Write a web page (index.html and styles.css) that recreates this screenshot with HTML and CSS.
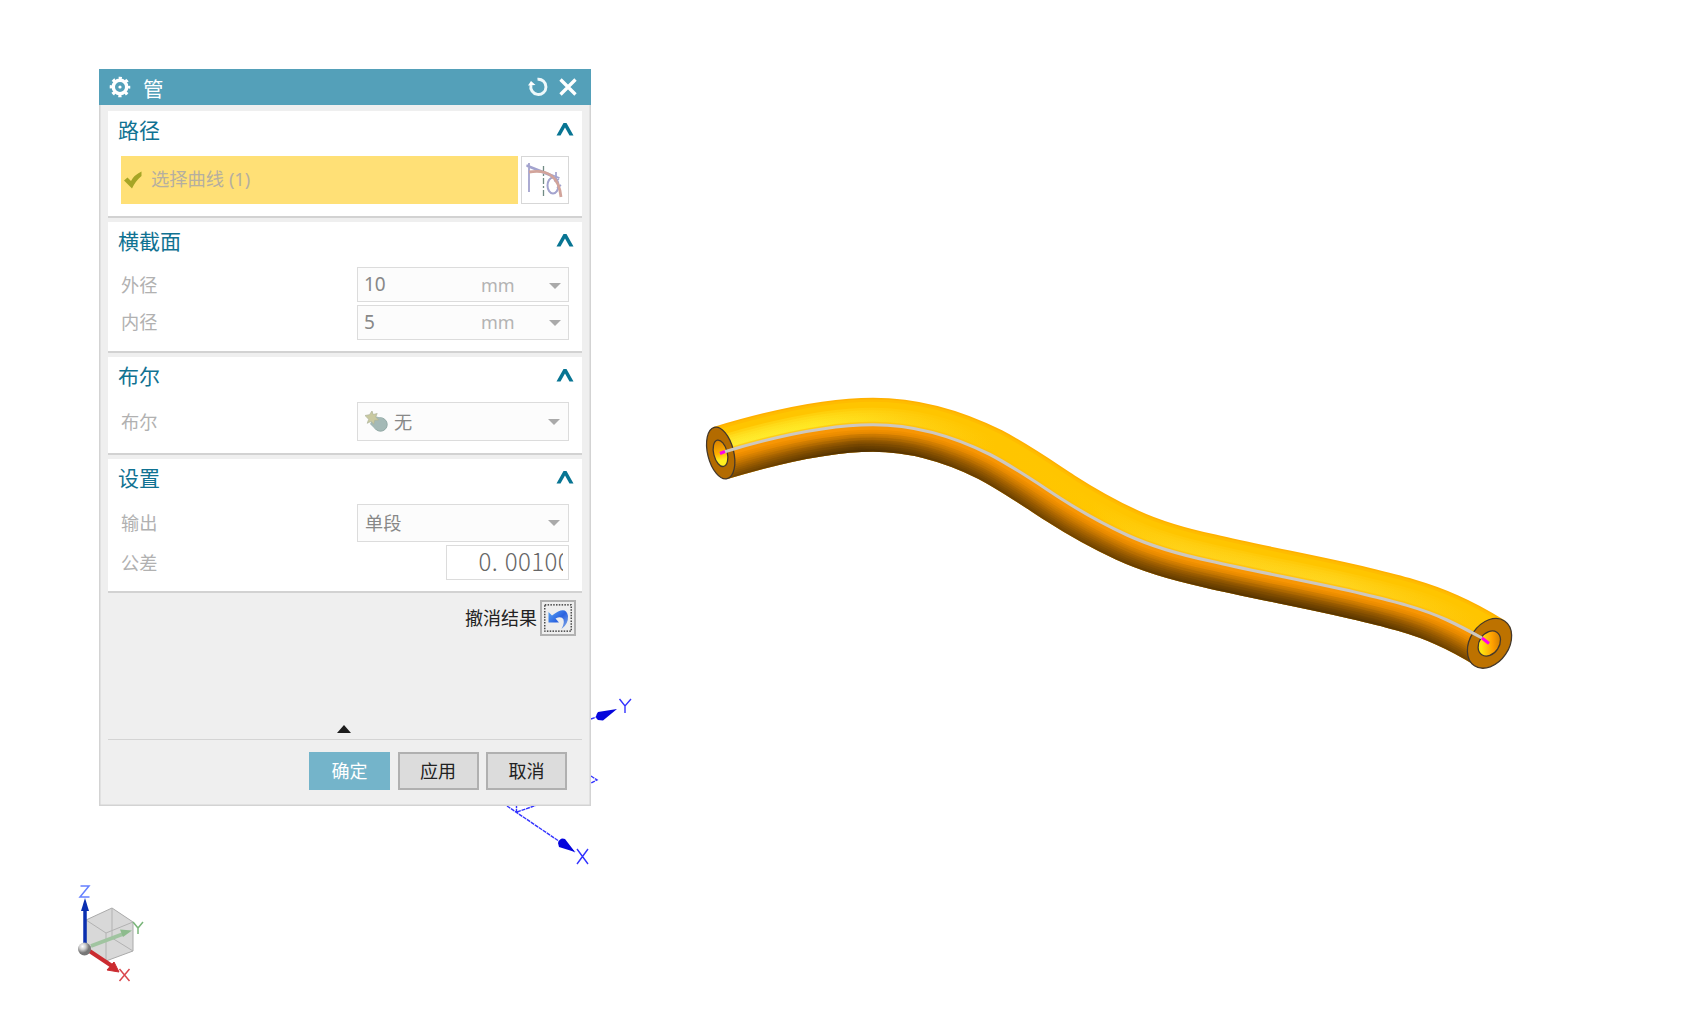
FILE: index.html
```html
<!DOCTYPE html>
<html lang="zh-CN">
<head>
<meta charset="utf-8">
<title>管</title>
<link rel="stylesheet" href="styles.css">
</head>
<body>
<main class="workspace">
<svg class="viewport" viewBox="0 0 1699 1024">
  <defs>
    <path id="centre" d="M720.5 453C770 438 825 424.700 873 424.700C915 424.700 955 437 990 454.500C1014 467 1037 483 1060 498C1081 511.500 1103 524 1127 535C1153 547 1182 555 1210 561C1261 573 1313 582 1363 594C1392 601 1421 608 1447 620C1463 627 1477 635 1490 643"/>
    <clipPath id="lower"><path d="M720.5 453C770 438 825 424.700 873 424.700C915 424.700 955 437 990 454.500C1014 467 1037 483 1060 498C1081 511.500 1103 524 1127 535C1153 547 1182 555 1210 561C1261 573 1313 582 1363 594C1392 601 1421 608 1447 620C1463 627 1477 635 1490 643L1470 720H700Z"/></clipPath>
    <linearGradient id="glow" gradientUnits="userSpaceOnUse" x1="720" y1="0" x2="1490" y2="0">
      <stop offset="0" stop-color="#fff238"/><stop offset=".12" stop-color="#ffec28"/><stop offset=".24" stop-color="#ffd416"/><stop offset=".36" stop-color="#ffc500"/><stop offset=".48" stop-color="#ffc800"/><stop offset=".6" stop-color="#ffd41c"/><stop offset=".8" stop-color="#ffd722"/><stop offset="1" stop-color="#ffc400"/>
    </linearGradient>
    <linearGradient id="shade" gradientUnits="userSpaceOnUse" x1="720" y1="0" x2="1490" y2="0">
      <stop offset="0" stop-color="#3c2400" stop-opacity="0"/><stop offset=".18" stop-color="#3c2400" stop-opacity=".65"/><stop offset=".3" stop-color="#3c2400" stop-opacity=".3"/><stop offset=".45" stop-color="#3c2400" stop-opacity=".1"/><stop offset=".65" stop-color="#3c2400" stop-opacity=".5"/><stop offset=".85" stop-color="#3c2400" stop-opacity=".5"/><stop offset="1" stop-color="#3c2400" stop-opacity="0"/>
    </linearGradient>
    <linearGradient id="boreL" x1="0" y1="0" x2="0" y2="1"><stop offset="0" stop-color="#d98200"/><stop offset=".5" stop-color="#ffb000"/><stop offset=".75" stop-color="#fff020"/></linearGradient>
    <linearGradient id="boreR" x1="1" y1="0" x2="0" y2="1"><stop offset=".1" stop-color="#c97800"/><stop offset=".4" stop-color="#ff9f00"/><stop offset=".75" stop-color="#ffe310"/></linearGradient>
    <radialGradient id="ball" cx=".35" cy=".3"><stop offset="0" stop-color="#fff"/><stop offset=".5" stop-color="#ccc"/><stop offset="1" stop-color="#777"/></radialGradient>
  </defs>
  <g class="tube">
    <g>
      <use href="#centre" stroke="#ffb000" stroke-width="54"/>
      <use href="#centre" stroke="#ffbc00" stroke-width="51"/>
      <use href="#centre" stroke="#ffc500" stroke-width="46"/>
      <g stroke="url(#glow)" stroke-opacity=".3">
        <use href="#centre" stroke-width="34"/><use href="#centre" stroke-width="29"/><use href="#centre" stroke-width="24"/><use href="#centre" stroke-width="19"/><use href="#centre" stroke-width="15"/><use href="#centre" stroke-width="11"/>
      </g>
      <use href="#centre" stroke="#ffba08" stroke-opacity=".6" stroke-width="6"/>
    </g>
    <g clip-path="url(#lower)">
      <use href="#centre" stroke="#7b4a00" stroke-width="54"/>
      <use href="#centre" stroke="#865100" stroke-width="50"/>
      <use href="#centre" stroke="#925800" stroke-width="46"/>
      <use href="#centre" stroke="#9e5f00" stroke-width="42"/>
      <use href="#centre" stroke="#ab6600" stroke-width="38"/>
      <use href="#centre" stroke="#b86e00" stroke-width="34"/>
      <use href="#centre" stroke="#c57600" stroke-width="30"/>
      <use href="#centre" stroke="#d07d00" stroke-width="26"/>
      <use href="#centre" stroke="#dc8400" stroke-width="22"/>
      <use href="#centre" stroke="#e78a00" stroke-width="18"/>
      <use href="#centre" stroke="#ef8f00" stroke-width="14"/>
      <use href="#centre" stroke="#f89604" stroke-width="10"/>
      <mask id="rim" maskUnits="userSpaceOnUse" x="690" y="380" width="840" height="320">
        <use href="#centre" stroke="#fff" stroke-width="56"/>
        <use href="#centre" stroke="#ccc" stroke-width="49"/>
        <use href="#centre" stroke="#aaa" stroke-width="43"/>
        <use href="#centre" stroke="#888" stroke-width="37"/>
        <use href="#centre" stroke="#555" stroke-width="31"/>
        <use href="#centre" stroke="#2a2a2a" stroke-width="25"/>
        <use href="#centre" stroke="#000" stroke-width="18"/>
      </mask>
      <g mask="url(#rim)"><use href="#centre" stroke="url(#shade)" stroke-width="54"/></g>
    </g>
  </g>
  <g class="tube-end">
    <ellipse cx="720.7" cy="453" rx="13" ry="26.500" transform="rotate(-14 720.7 453)" fill="#b36b00"/>
    <ellipse cx="720.5" cy="453.300" rx="6.800" ry="13.500" transform="rotate(-14 720.5 453.3)" fill="url(#boreL)"/>
    <ellipse cx="1489.500" cy="643.300" rx="19.500" ry="27" transform="rotate(34 1489.5 643.3)" fill="#bd7200"/>
    <ellipse cx="1489.300" cy="643.500" rx="10" ry="13.500" transform="rotate(34 1489.3 643.5)" fill="url(#boreR)"/>
  </g>
  <path class="path-line" d="M724 451.900C770 438 825 424.700 873 424.700C915 424.700 955 437 990 454.500C1014 467 1037 483 1060 498C1081 511.500 1103 524 1127 535C1153 547 1182 555 1210 561C1261 573 1313 582 1363 594C1392 601 1421 608 1447 620C1460 626 1471 632 1482 638"/>
  <path class="path-tip" d="M720 453.500l5-2M1482 638l7 5.500"/>

  <g class="datum">
    <path stroke-dasharray="4 .8" d="M507 806L575 852M517 812l20-7M516.500 804v8M591 719l8-3M591 776l6 4-6 3"/>
    <path class="datum-head" d="M617 709L598 712q-4 5 0 8l5 .5ZM575 852L565 839q-5-2-7 4l1 4Z"/>
    <path d="M619.500 699l5.500 7 6-7M625 706v7M577 849l11 15M588 849l-11 15"/>
  </g>

  <g class="triad">
    <path d="M86 920l26-12 21 14v29l-27 10-20-13Z" fill="#d8d8d8" stroke="#aaa"/>
    <path d="M86 920l20 13 27-11M106 933v28M112 908v30l21 13M112 938l-26 10" fill="none" stroke="#b2b2b2"/>
    <path d="M91 946l32-12" stroke="#a0c4a0" stroke-width="4"/>
    <path d="M120 929.500l12 1-9 6.500Z" fill="#8dbb8d"/>
    <path d="M85 947v-39" stroke="#0a2fb0" stroke-width="3.500"/>
    <path d="M85 898l4 13h-8Z" fill="#0a2fb0"/>
    <path d="M88 950l24 16" stroke="#cb2b30" stroke-width="4"/>
    <path d="M114 962l5 10-12-2Z" fill="#cb2b30" stroke="#cb2b30"/>
    <circle cx="84.500" cy="949" r="6.500" fill="url(#ball)"/>
    <path d="M80.500 886h8.500l-9 11h9.500" fill="none" stroke="#6580ff" stroke-width="1.500"/>
    <path d="M133 922l5 6 5-6M138 928v6" fill="none" stroke="#79b579" stroke-width="1.500"/>
    <path d="M119.500 969l10 12M129.500 969l-10 12" fill="none" stroke="#d9474d" stroke-width="1.500"/>
  </g>
</svg>

<section class="dialog">
  <header class="titlebar">
    <svg class="gear" viewBox="0 0 22 22"><circle cx="11" cy="11" r="6.700" fill="none" stroke="#fff" stroke-width="3.400"/><circle cx="11" cy="11" r="9" fill="none" stroke="#fff" stroke-width="2.600" stroke-dasharray="3.200 3.870" stroke-dashoffset="1.600"/><circle cx="11" cy="11" r="1.600" fill="#fff"/></svg>
    <h1>管</h1>
    <svg class="reset" viewBox="0 0 20 20"><path d="M9.500 2.300A7.600 7.600 0 1 1 3 8" fill="none" stroke="#eef8fa" stroke-width="2.900"/><path d="M0 8.500L3 4l4.500 4Z" fill="#fff"/></svg>
    <svg class="close" viewBox="0 0 18 18"><path d="M1.500 1.500l15 15M16.500 1.500l-15 15" stroke="#fff" stroke-width="3.300"/></svg>
  </header>

  <section class="group path">
    <h2>路径<svg class="chevron" viewBox="0 0 18 14"><path d="M.5 13.500L7.500 1h3L17.500 13.500H13.500L9 5.500 4.500 13.500Z" fill="#087593"/></svg></h2>
    <div class="pick-row">
      <div class="pick"><svg class="tick" viewBox="0 0 18 18"><path d="M0 9.500L3.500 6.500 7 10Q10 4 17.500 .5V5Q11.500 10 8 17.500Z" fill="#a6a526"/></svg><span>选择曲线 (1)</span></div>
      <button class="curve-button" aria-label="曲线"><svg viewBox="0 0 44 44"><g fill="none"><path d="M7 5v29M4.500 7l33 13M4.500 8l27 11" stroke="#a3a3ce" stroke-width="1.800"/><ellipse cx="31" cy="27.500" rx="5.500" ry="8" stroke="#a3a3ce" stroke-width="2"/><path d="M34 14v7M37 21l-5 2M39 27l-4 3" stroke="#a3a3ce" stroke-width="1.700"/><path d="M21.500 8v31" stroke="#718b84" stroke-width="1.300" stroke-dasharray="6 2 2 2"/><path d="M7 14Q36 9 39 39" stroke="#d2a49b" stroke-width="2.800"/></g></svg></button>
    </div>
  </section>

  <section class="group size">
    <h2>横截面<svg class="chevron" viewBox="0 0 18 14"><path d="M.5 13.500L7.500 1h3L17.500 13.500H13.500L9 5.500 4.500 13.500Z" fill="#087593"/></svg></h2>
    <div class="row number"><span>外径</span><div class="field"><b>10</b><i>mm</i><em></em></div></div>
    <div class="row number"><span>内径</span><div class="field"><b>5</b><i>mm</i><em></em></div></div>
  </section>

  <section class="group boolean">
    <h2>布尔<svg class="chevron" viewBox="0 0 18 14"><path d="M.5 13.500L7.500 1h3L17.500 13.500H13.500L9 5.500 4.500 13.500Z" fill="#087593"/></svg></h2>
    <div class="row"><span>布尔</span><div class="field select"><svg class="body-icon" viewBox="0 0 23 21"><circle cx="15.500" cy="13.500" r="6.700" fill="#a4b9b6" stroke="#91a9a5"/><path d="M9 5l9 2-7 12-6-6Z" fill="#a4b9b6"/><path d="M7 0l1.200 3.500 4-1-1.500 3.500 3 3-4 .3-1 4-2.500-3-4 2 1.500-4L0 4.500l4.500-.8Z" fill="#c9c9a0" stroke="#adb39a" stroke-width=".7"/></svg><span>无</span><em></em></div></div>
  </section>

  <section class="group settings">
    <h2>设置<svg class="chevron" viewBox="0 0 18 14"><path d="M.5 13.500L7.500 1h3L17.500 13.500H13.500L9 5.500 4.500 13.500Z" fill="#087593"/></svg></h2>
    <div class="row"><span>输出</span><div class="field select"><span>单段</span><em></em></div></div>
    <div class="row tolerance"><span>公差</span><div class="field"><div class="digits">0<span class="point">.</span>00100</div></div></div>
  </section>

  <div class="undo"><span>撤消结果</span><button aria-label="撤消"><svg viewBox="0 0 28 28"><defs><linearGradient id="arrow" x1="0" y1="0" x2="1" y2="1"><stop offset="0" stop-color="#5aa6f4"/><stop offset=".5" stop-color="#2a62e0"/><stop offset="1" stop-color="#8fb2e8"/></linearGradient></defs><rect x=".8" y=".8" width="26.400" height="26.400" fill="none" stroke="#222" stroke-width="1.200" stroke-dasharray="1.500 1.300"/><path d="M4.500 8v10.500h10.500l-3.500-4q6-3 8 1 1 4-2 9.500 7-5 6.500-13Q22 1 8 11.500Z" fill="url(#arrow)"/></svg></button></div>
  <div class="collapse"></div>
  <footer><button class="primary">确定</button><button>应用</button><button>取消</button></footer>
</section>
</main>
</body>
</html>
```
FILE: styles.css
```css
* { box-sizing: border-box; }
body { margin: 0; background: #fff; }
.workspace { position: relative; width: 1699px; height: 1024px; overflow: hidden; font-family: "Noto Sans CJK SC", "Noto Sans", sans-serif; }
.viewport { position: absolute; inset: 0; width: 1699px; height: 1024px; }
.tube use { fill: none; }
.tube-end { stroke: #44382a; stroke-width: 1.3; }
.path-line { fill: none; stroke: #cdc8c0; stroke-width: 3.1; }
.path-tip { stroke: #f0e; stroke-width: 3; }
.datum { fill: none; stroke: #3434ff; stroke-width: 1.4; }
.datum .datum-head { fill: #0505dc; stroke: none; }

.dialog { position: absolute; left: 99px; top: 69px; width: 492px; height: 737px; display: flex; flex-direction: column; background: #efefef; box-shadow: inset 0 0 0 1.5px #d3d3d3; }
.titlebar { height: 36px; flex: none; display: flex; align-items: center; padding: 0 14px 0 10px; background: #54a0b9; color: #fff; margin-bottom: 6px; }
.titlebar h1 { margin: 2px auto 0 12px; font-size: 20.5px; line-height: 30px; font-weight: 400; }
.gear { width: 22px; height: 22px; margin-top: -1px; }
.reset { width: 20px; height: 20px; margin-right: 11px; }
.close { width: 18px; height: 18px; margin-top: -1px; }
.group { flex: none; margin: 0 9px 4px; padding: 0 13.5px 0 13px; background: #fff; border-bottom: 2px solid #d2d2d2; }
.path { height: 107px; }
.size { height: 131px; }
.boolean { height: 98px; }
.settings { height: 134px; }
h2 { display: flex; justify-content: space-between; align-items: center; height: 40px; margin: 0 -5px 0 -3px; padding-bottom: 4px; color: #107292; font-size: 21px; line-height: 36px; font-weight: 400; }
.chevron { width: 18px; height: 14px; }
.pick-row { display: flex; gap: 3px; padding-top: 5px; }
.pick { display: flex; align-items: center; flex: 1; height: 48px; padding: 0 0 1px 3px; background: #ffe076; color: #b5afa0; font: 18.3px/36px "Noto Sans", "Noto Sans CJK SC", sans-serif; }
.pick span { margin-top: -2px; }
.tick { width: 18px; height: 18px; margin-right: 9px; }
.curve-button { width: 48px; height: 48px; padding: 0; background: #fff; border: 1.5px solid #d7d7d7; }
.curve-button svg { display: block; width: 44px; height: 44px; }
.row { display: flex; align-items: center; justify-content: space-between; color: #b1b1b1; font-size: 18.2px; line-height: 32px; }
.row > span, .select > span { padding-bottom: 2px; }
.field { display: flex; align-items: center; width: 211.5px; height: 35px; padding-left: 7px; background: #fcfcfc; border: 1.5px solid #dcdcdc; color: #888; }
.size h2 { height: 39px; padding-bottom: 3px; }
.size .row { margin-top: 6px; }
.size .row + .row { margin-top: 2.5px; }
.field b, .field i { font: 400 19px/32px "Noto Sans", sans-serif; }
.field b { width: 116px; margin: -1px 0 0 -1px; }
.field i { margin-left: 1px; color: #b3b3b3; font-size: 18px; }
.field em { width: 0; height: 0; margin: 2px 6.5px 0 auto; border: 6px solid transparent; border-top: 6.5px solid #aaa; border-bottom: 0; }
.select em { margin: 0 8px 0 auto; }
.boolean .row { padding-top: 5px; }
.boolean .select { height: 39px; }
.body-icon { width: 23px; height: 21px; margin-right: 6px; }
.settings .row { padding-top: 5px; }
.settings .select { height: 38px; }
.settings .tolerance { padding-top: 3px; }
.tolerance .field { width: 123px; padding: 0; background: #fff; }
.digits { width: 84px; margin: -3px 0 0 32px; overflow: hidden; white-space: nowrap; font-size: 24px; line-height: 36px; font-weight: 300; letter-spacing: .4px; color: #666; }
.point { letter-spacing: 7px; }
.undo { display: flex; align-items: center; justify-content: flex-end; gap: 3px; height: 36px; margin: 3px 15px 0 0; color: #222; font-size: 18px; }
.undo span { padding-bottom: 2px; }
.undo button { width: 36px; height: 36px; padding: 2px; background: #eee; border: 2px solid #b1b1b1; }
.undo svg { display: block; width: 28px; height: 28px; }
.collapse { height: 104px; margin: 0 9px; border-bottom: 1.5px solid #d4d4d4; display: flex; align-items: flex-end; justify-content: center; padding: 0 2px 6px 0; }
.collapse::before { content: ""; border: 7px solid transparent; border-bottom: 8px solid #1d1d1d; border-top: 0; }
footer { display: flex; justify-content: flex-end; gap: 7.5px; padding: 12px 24px 0 0; }
footer button { width: 81px; height: 38px; padding: 0 0 2px; border: 2px solid #b0b0b0; background: #dcdcdc; color: #222; font: 18px/32px "Noto Sans CJK SC", sans-serif; }
footer .primary { background: #74b4ca; border-color: #74b4ca; color: #fff; }
```
